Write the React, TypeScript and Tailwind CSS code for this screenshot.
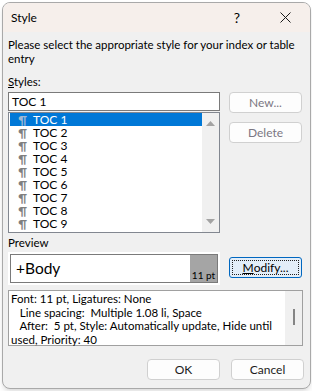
import { FC } from "react";

const font = { fontFamily: 'Lato, "Noto Sans", sans-serif' };

const styles = ["TOC 1", "TOC 2", "TOC 3", "TOC 4", "TOC 5", "TOC 6", "TOC 7", "TOC 8", "TOC 9"];

const Btn: FC<{ label: string; disabled?: boolean; className?: string }> = ({ label, disabled, className }) => (
  <div
    className={
      "h-[21px] w-[73px] flex items-center justify-center rounded-[4px] border border-[#d0d0d0] bg-[#fdfdfd] text-[12px] leading-none " +
      (disabled ? "text-[#7b7782] " : "text-[#1b1b1b] ") +
      (className ?? "")
    }
  >
    {label}
  </div>
);

const App: FC = () => {
  return (
    <div className="w-[312px] h-[391px] bg-white pl-[2px] pt-[2px] overflow-hidden" style={font}>
      <div className="w-[309px] h-[387px] rounded-[8px] border border-[#a9a9a9] bg-[#f0f0f0] overflow-hidden shadow-md flex flex-col">
        {/* title bar */}
        <div className="h-[29px] bg-[#f6efeb] flex items-center pl-[8px] text-[12px] text-black">
          <span className="flex-1">Style</span>
          <span className="text-[14px] mr-[40px]">?</span>
          <svg width="11" height="11" viewBox="0 0 11 11" className="mr-[19px]">
            <path d="M0.5 0.5 L10.5 10.5 M10.5 0.5 L0.5 10.5" stroke="#1a1a1a" strokeWidth="1" />
          </svg>
        </div>

        <div className="pl-[5px] pr-[6px] text-[11.5px] text-black">
          <p className="mt-[6px] leading-[14px] whitespace-nowrap">
            Please select the appropriate style for your index or table
            <br />
            entry
          </p>
          <div className="mt-[9px] leading-[14px]">
            <span className="underline">S</span>tyles:
          </div>

          <div className="mt-[3px] flex gap-[9px]">
            <div className="w-[212px]">
              <div className="h-[19px] border border-[#7a7a7a] bg-white flex items-center pl-[3px] text-[12px]">
                TOC 1
              </div>
              <div className="mt-[1px] h-[121px] border border-[#828790] bg-white flex">
                <div className="flex-1 pl-[1px]">
                  {styles.map((s, i) => (
                    <div
                      key={s}
                      className={
                        "h-[13px] flex items-center text-[12px] leading-[13px] " +
                        (i === 0 ? "bg-[#0078d7] text-white" : "text-black")
                      }
                    >
                      <span
                        className={
                          "w-[23px] text-right pr-[6px] font-bold " + (i === 0 ? "text-[#9fb8d2]" : "text-[#7f7f7f]")
                        }
                      >
                        ¶
                      </span>
                      <span>{s}</span>
                    </div>
                  ))}
                </div>
                <div className="w-[17px] bg-[#f0f0f0] flex flex-col items-center justify-between py-[8px]">
                  <svg width="9" height="5" viewBox="0 0 9 5">
                    <path d="M0 5 L4.5 0 L9 5 Z" fill="#a3a3a3" />
                  </svg>
                  <svg width="9" height="5" viewBox="0 0 9 5">
                    <path d="M0 0 L4.5 5 L9 0 Z" fill="#a3a3a3" />
                  </svg>
                </div>
              </div>
            </div>
            <div className="flex flex-col gap-[9px]">
              <Btn label="New..." disabled />
              <Btn label="Delete" disabled />
            </div>
          </div>

          <div className="mt-[3px] leading-[14px]">Preview</div>

          <div className="mt-[2px] flex gap-[9px]">
            <div className="w-[212px] h-[33px] bg-white p-[2px]">
              <div className="h-full border border-[#7a7a7a] flex">
                <div className="flex-1 flex items-center pl-[5px] text-[15.5px] leading-none">+Body</div>
                <div className="w-[27px] bg-[#a5a5a5] flex items-end justify-center pb-[1px] text-[10px] leading-[12px]">
                  11 pt
                </div>
              </div>
            </div>
            <div className="mt-[5px] h-[21px] w-[73px] rounded-[3px] border border-[#0067c0] bg-[#e3eef9] p-[2px]">
              <div className="h-full border border-dotted border-[#222] flex items-center justify-center text-[12px] leading-none">
                <span className="underline">M</span>odify...
              </div>
            </div>
          </div>

          <div className="mt-[5px] h-[56px] w-[295px] border border-[#a0a0a0] bg-white flex">
            <div className="flex-1 pl-[2px] pt-[1px] text-[11.5px] leading-[13.5px] whitespace-pre">
              {"Font: 11 pt, Ligatures: None\n   Line spacing:  Multiple 1.08 li, Space\n   After:  5 pt, Style: Automatically update, Hide until\nused, Priority: 40"}
            </div>
            <div className="w-[17px] bg-[#f0f0f0] flex justify-center pt-[18px]">
              <div className="w-[2px] h-[16px] bg-[#858585]" />
            </div>
          </div>

          <div className="mt-[13px] flex justify-end gap-[11px]">
            <Btn label="OK" className="w-[72px]" />
            <Btn label="Cancel" />
          </div>
        </div>
      </div>
    </div>
  );
};

export default App;
